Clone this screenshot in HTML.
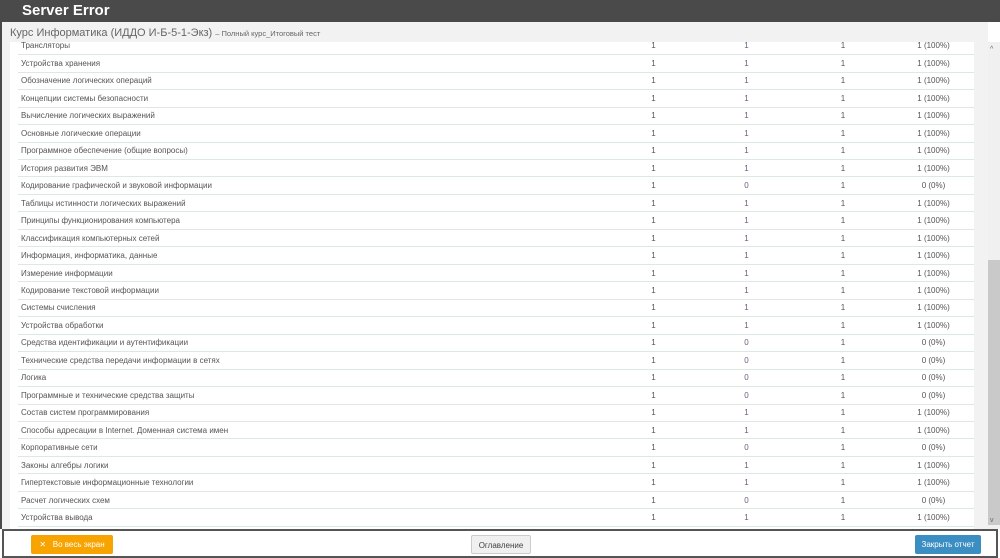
<!DOCTYPE html>
<html><head><meta charset="utf-8"><style>
*{margin:0;padding:0;box-sizing:border-box}
body{width:1000px;height:558px;overflow:hidden;background:#fff;font-family:"Liberation Sans",sans-serif;position:relative}
.hdr{position:absolute;left:0;top:0;width:1000px;height:22px;background:#4a4a4a;color:#fff;font-weight:bold;font-size:15px;line-height:22px;padding-left:22px}
.lbar{position:absolute;left:0;top:22px;width:2px;height:507px;background:#4a4a4a}
.sub{position:absolute;left:2px;top:22px;width:986px;height:20px;background:#f2f2f2;color:#666;font-size:11px;line-height:22px;padding-left:8px}
.sub small{font-size:7.5px}
.rw{position:absolute;left:988px;top:22px;width:12px;height:20px;background:#fff}
.gray{position:absolute;left:2px;top:42px;width:986px;height:487px;background:#f2f2f2}
.panel{position:absolute;left:10px;top:42px;width:964px;height:487px;background:#fff;overflow:hidden}
table{border-collapse:collapse;position:absolute;left:8px;top:-4.8px;width:956px;font-size:8px;color:#555}
tr{height:17.48px}
td{border-bottom:1px solid #dde8e6;padding:0 3px}
td.c{text-align:center}
td.p{color:#6f5a80}
.sb{position:absolute;left:988px;top:42px;width:12px;height:487px;background:#f0f0f0}
.th{position:absolute;left:988px;top:260px;width:12px;height:265px;background:#c9c9c9}
.ar{position:absolute;left:990px;font-size:7px;color:#666}
.ft{position:absolute;left:2px;top:529px;width:996px;height:29px;border:2px solid #555;background:#fff}
.b{position:absolute;top:4px;height:19px;font-size:8px;line-height:19px;text-align:center;border-radius:2px}
</style></head><body>
<div class="hdr">Server Error</div>
<div class="lbar"></div>
<div class="sub">Курс Информатика (ИДДО И-Б-5-1-Экз) <small>– Полный курс_Итоговый тест</small></div>
<div class="rw"></div>
<div class="gray"></div>
<div class="panel"><table>
<colgroup><col style="width:589px"><col style="width:93px"><col style="width:93px"><col style="width:100px"><col></colgroup>
<tbody id="tb"></tbody></table></div>
<div class="sb"></div><div class="th"></div>
<div class="ar" style="top:46px">&#94;</div><div class="ar" style="top:517px">v</div>
<div class="ft">
<div class="b" style="left:27px;width:82px;background:#f7a300;color:#fff">✕&nbsp;&nbsp; Во весь экран</div>
<div class="b" style="left:467px;width:60px;background:#f0f0f0;border:1px solid #ccc;color:#444">Оглавление</div>
<div class="b" style="left:911px;width:66px;background:#3b8ec2;color:#fff">Закрыть отчет</div>
</div>
<script>
var r=[["Трансляторы",1],["Устройства хранения",1],["Обозначение логических операций",1],["Концепции системы безопасности",1],["Вычисление логических выражений",1],["Основные логические операции",1],["Программное обеспечение (общие вопросы)",1],["История развития ЭВМ",1],["Кодирование графической и звуковой информации",0],["Таблицы истинности логических выражений",1],["Принципы функционирования компьютера",1],["Классификация компьютерных сетей",1],["Информация, информатика, данные",1],["Измерение информации",1],["Кодирование текстовой информации",1],["Системы счисления",1],["Устройства обработки",1],["Средства идентификации и аутентификации",0],["Технические средства передачи информации в сетях",0],["Логика",0],["Программные и технические средства защиты",0],["Состав систем программирования",1],["Способы адресации в Internet. Доменная система имен",1],["Корпоративные сети",0],["Законы алгебры логики",1],["Гипертекстовые информационные технологии",1],["Расчет логических схем",0],["Устройства вывода",1]];
var h="";r.forEach(function(x){h+="<tr><td>"+x[0]+"</td><td class=c>1</td><td class='c p'>"+x[1]+"</td><td class=c>1</td><td class=c>"+(x[1]?"1 (100%)":"0 (0%)")+"</td></tr>"});
document.getElementById("tb").innerHTML=h;
</script>
</body></html>
